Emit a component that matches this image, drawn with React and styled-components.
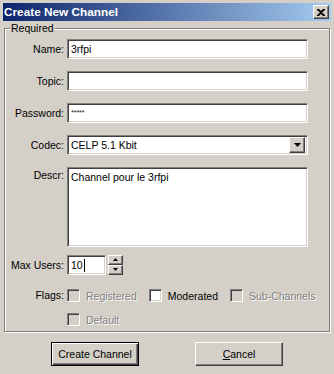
import React from 'react';
import styled, { createGlobalStyle, css } from 'styled-components';

const GlobalStyle = createGlobalStyle`
	html, body {
		margin: 0;
		padding: 0;
		background: #d4d0c8;
	}
	body {
		font: 10.5px "Liberation Sans", Arial, sans-serif;
		color: #000;
	}
`

const sunken = css`
	border: 1px solid;
	border-color: #808080 #ffffff #ffffff #808080;
	box-shadow: inset 1px 1px 0 #404040, inset -1px -1px 0 #d4d0c8;
`

const raised = css`
	border: 1px solid;
	border-color: #ffffff #404040 #404040 #ffffff;
	box-shadow: inset -1px -1px 0 #808080, inset 1px 1px 0 #d4d0c8;
	background: #d4d0c8;
`

const CloseIcon = () => (
	<svg width="8" height="7" viewBox="0 0 8 7">
		<path d="M0 0h2l2 2 2-2h2v1L5 3.5 8 6v1H6L4 5 2 7H0V6l3-2.5L0 1z" fill="#000" />
	</svg>
)

const Arrow = ({down, size = 7}) => (
	<svg width={size} height={Math.ceil(size / 2) + 1} viewBox={`0 0 ${size} ${Math.ceil(size / 2) + 1}`}>
		{down
			? <polygon points={`0,0 ${size},0 ${size / 2},${Math.ceil(size / 2)}`} fill="#000" />
			: <polygon points={`0,${Math.ceil(size / 2)} ${size},${Math.ceil(size / 2)} ${size / 2},0`} fill="#000" />}
	</svg>
)

const Checkbox = ({disabled, label}) => (
	<CheckItem>
		<CheckBoxBox disabled={disabled} />
		<CheckLabel disabled={disabled}>{label}</CheckLabel>
	</CheckItem>
)

const App = () => {
	return (
		<>
			<GlobalStyle />
			<Window>
				<TitleBar>
					<Title>Create New Channel</Title>
					<CloseButton><CloseIcon /></CloseButton>
				</TitleBar>
				<GroupBox>
					<Caption>Required</Caption>
					<Row>
						<Label>Name:</Label>
						<TextField>3rfpi</TextField>
					</Row>
					<Row mt={12}>
						<Label>Topic:</Label>
						<TextField />
					</Row>
					<Row mt={12}>
						<Label>Password:</Label>
						<TextField><Stars>*****</Stars></TextField>
					</Row>
					<Row mt={12}>
						<Label>Codec:</Label>
						<Select>
							<SelectText>CELP 5.1 Kbit</SelectText>
							<DropButton><Arrow down size={7} /></DropButton>
						</Select>
					</Row>
					<Row mt={12}>
						<Label top>Descr:</Label>
						<TextArea>Channel pour le 3rfpi</TextArea>
					</Row>
					<Row mt={8}>
						<Label>Max Users:</Label>
						<NumberField>10<Caret /></NumberField>
						<Spinner>
							<SpinButton><Arrow size={5} /></SpinButton>
							<SpinButton><Arrow down size={5} /></SpinButton>
						</Spinner>
					</Row>
					<Row mt={14} h={13}>
						<Label small>Flags:</Label>
						<Checks>
							<Checkbox disabled label="Registered" />
							<Checkbox label="Moderated" />
							<Checkbox disabled label="Sub-Channels" />
						</Checks>
					</Row>
					<Row mt={11} h={13}>
						<Label />
						<Checkbox disabled label="Default" />
					</Row>
				</GroupBox>
				<ButtonBar>
					<Button primary>Create Channel</Button>
					<Button><u>C</u>ancel</Button>
				</ButtonBar>
			</Window>
		</>
	)
}

const Window = styled.div`
	width: 334px;
	height: 374px;
	box-sizing: border-box;
	padding: 3px 3px 0 3px;
	background: #d4d0c8;
	overflow: hidden;
`
const TitleBar = styled.div`
	height: 18px;
	display: flex;
	align-items: center;
	justify-content: space-between;
	padding: 0 2px 0 1px;
	background: linear-gradient(to right, #0a246a, #a6caf0);
`
const Title = styled.span`
	color: #fff;
	font: bold 11.8px "Liberation Sans", Arial, sans-serif;
`
const CloseButton = styled.div`
	${raised};
	box-sizing: border-box;
	width: 16px;
	height: 14px;
	display: flex;
	align-items: center;
	justify-content: center;
`
const GroupBox = styled.div`
	position: relative;
	margin: 7px 1px 0 1px;
	padding: 10px 21px 5px 0;
	border: 1px solid #808080;
	box-shadow: inset 1px 1px 0 #fff, 1px 1px 0 #fff;
`
const Caption = styled.span`
	position: absolute;
	top: -7px;
	left: 5px;
	padding: 0 1px;
	line-height: 12px;
	background: #d4d0c8;
`
const Row = styled.div`
	display: flex;
	align-items: ${props => props.h ? 'center' : 'flex-start'};
	margin-top: ${props => props.mt || 0}px;
	height: ${props => props.h ? props.h + 'px' : 'auto'};
`
const Label = styled.div`
	flex: 0 0 59px;
	margin-right: 3px;
	text-align: right;
	line-height: ${props => props.top ? '15px' : props.small ? '13px' : '20px'};
	padding-top: ${props => props.top ? '1px' : '0'};
	white-space: nowrap;
`
const TextField = styled.div`
	${sunken};
	box-sizing: border-box;
	flex: 1;
	height: 20px;
	background: #fff;
	padding: 0 3px;
	line-height: 18px;
	white-space: nowrap;
`
const Stars = styled.span`
	font-size: 8px;
	color: #333;
	vertical-align: 2px;
	letter-spacing: -0.5px;
`
const Select = styled.div`
	${sunken};
	box-sizing: border-box;
	flex: 1;
	height: 20px;
	background: #fff;
	display: flex;
	align-items: center;
	padding: 1px 2px 1px 3px;
`
const SelectText = styled.span`
	flex: 1;
`
const DropButton = styled.div`
	${raised};
	box-sizing: border-box;
	width: 16px;
	height: 16px;
	display: flex;
	align-items: center;
	justify-content: center;
`
const TextArea = styled.div`
	${sunken};
	box-sizing: border-box;
	flex: 1;
	height: 80px;
	background: #fff;
	padding: 2px 3px;
	line-height: 14px;
`
const NumberField = styled.div`
	${sunken};
	box-sizing: border-box;
	width: 39px;
	height: 20px;
	background: #fff;
	padding: 0 3px;
	line-height: 18px;
	display: flex;
	align-items: center;
`
const Caret = styled.span`
	display: inline-block;
	width: 1px;
	height: 13px;
	background: #000;
	margin-left: 1px;
`
const Spinner = styled.div`
	display: flex;
	flex-direction: column;
	margin-left: 2px;
	width: 15px;
	height: 20px;
`
const SpinButton = styled.div`
	${raised};
	box-sizing: border-box;
	height: 10px;
	display: flex;
	align-items: center;
	justify-content: center;
`
const Checks = styled.div`
	display: flex;
	gap: 12px;
`
const CheckItem = styled.div`
	display: flex;
	align-items: center;
	gap: 6px;
`
const CheckBoxBox = styled.span`
	${sunken};
	box-sizing: border-box;
	width: 13px;
	height: 13px;
	background: ${props => props.disabled ? '#d4d0c8' : '#fff'};
`
const CheckLabel = styled.span`
	color: ${props => props.disabled ? '#808080' : '#000'};
	text-shadow: ${props => props.disabled ? '1px 1px 0 #fff' : 'none'};
	white-space: nowrap;
`
const ButtonBar = styled.div`
	display: flex;
	justify-content: center;
	gap: 56px;
	margin-top: 10px;
`
const Button = styled.div`
	box-sizing: border-box;
	width: 88px;
	height: 24px;
	display: flex;
	align-items: center;
	justify-content: center;
	background: #d4d0c8;
	${props => props.primary ? css`
		border: 1px solid #000;
		box-shadow: inset 1px 1px 0 #fff, inset -1px -1px 0 #404040, inset -2px -2px 0 #808080;
	` : raised};
	u {
		text-decoration: underline;
	}
`

export default App;
